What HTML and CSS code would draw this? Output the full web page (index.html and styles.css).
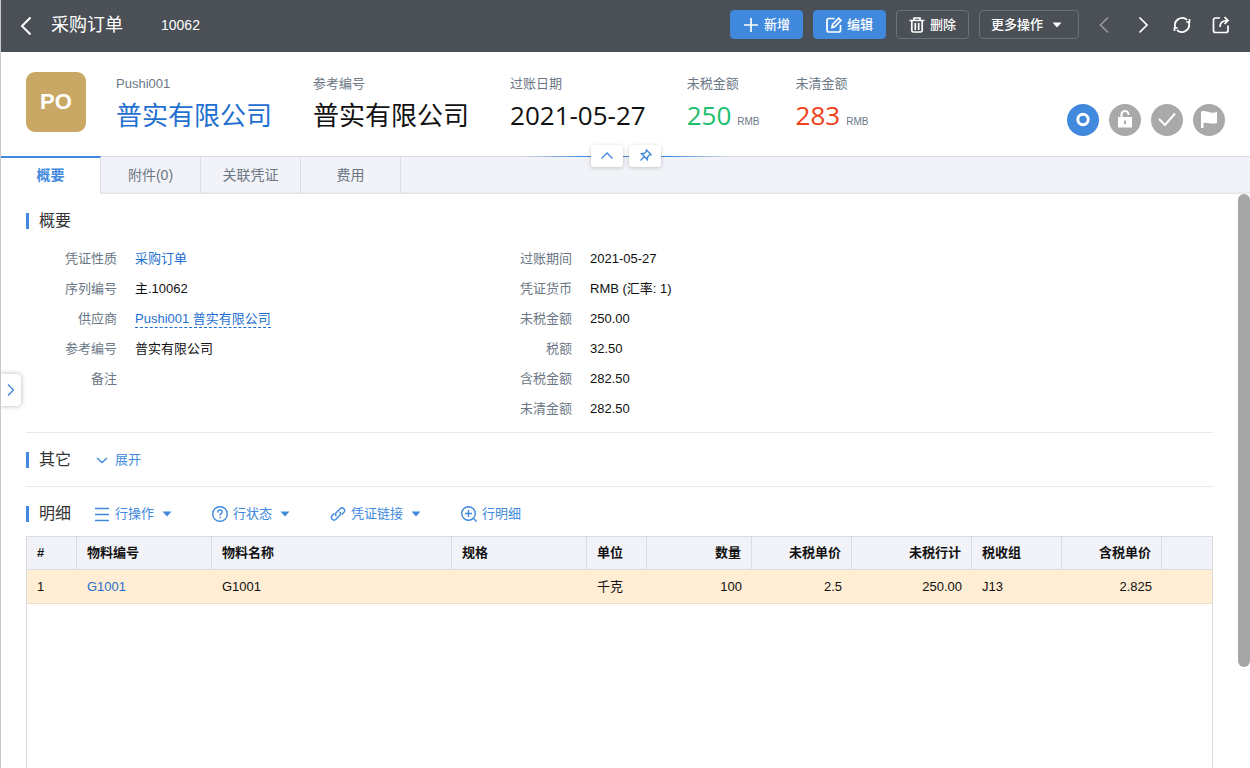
FILE: index.html
```html
<!DOCTYPE html>
<html lang="zh-CN">
<head>
    <meta charset="UTF-8">
    <meta name="viewport" content="width=device-width, initial-scale=1.0">
    <title>采购订单 10062</title>
    <link rel="stylesheet" href="styles.css">
</head>
<body>

<header class="topbar">
    <button class="icon-btn back" type="button" aria-label="返回">
        <svg width="12" height="20" viewBox="0 0 12 20"><path d="M10.500 2.500L2 11l8.500 8.500"/></svg>
    </button>
    <h1>采购订单</h1>
    <span class="doc-no">10062</span>
    <div class="actions">
        <button class="btn primary" type="button">
            <svg width="16" height="16" viewBox="0 0 16 16"><path d="M8 1v14M1 8h14"/></svg>新增
        </button>
        <button class="btn primary" type="button">
            <svg width="16" height="16" viewBox="0 0 16 16"><path d="M8.500 1.500H3Q1 1.500 1 3.500V13q0 2 2 2h9.500q2 0 2-2V8M6 10.500l.6-3L12.700 1.200l2.200 2.200L8.800 9.800z"/></svg>编辑
        </button>
        <button class="btn" type="button">
            <svg width="16" height="16" viewBox="0 0 16 16"><path d="M.5 3.500h15M5 3.500V1h6v2.500M2.800 4v9.500q0 1.500 1.500 1.500h7.400q1.500 0 1.500-1.500V4M6.300 6v7M9.700 6v7"/></svg>删除
        </button>
        <button class="btn more" type="button">更多操作
            <svg class="caret" width="10" height="6" viewBox="0 0 10 6"><path d="M.5.500h9L5 5.500z"/></svg>
        </button>
    </div>
    <nav class="tools">
        <button class="icon-btn" type="button" aria-label="上一张" disabled>
            <svg width="18" height="18" viewBox="0 0 18 18"><path d="M13 1.500L5.500 9l7.500 7.500"/></svg>
        </button>
        <button class="icon-btn" type="button" aria-label="下一张">
            <svg width="18" height="18" viewBox="0 0 18 18"><path d="M5.500 1.500L13 9l-7.500 7.500"/></svg>
        </button>
        <button class="icon-btn" type="button" aria-label="刷新">
            <svg width="18" height="18" viewBox="0 0 18 18"><path d="M2.400 11.900A7.300 7.300 0 0 1 14.100 3.900M15.600 6.100A7.300 7.300 0 0 1 3.900 14.100M1.500 15v-3h3.200M16.500 3v3h-3.200"/></svg>
        </button>
        <button class="icon-btn" type="button" aria-label="新窗口打开">
            <svg width="18" height="18" viewBox="0 0 18 18"><path d="M8 2H3.500q-2 0-2 2v10.500q0 2 2 2h10.500q2 0 2-2V9.500M8 11q0-6.500 7.500-6.500M12.500 1.200L16 4.500l-3.500 3.300"/></svg>
        </button>
    </nav>
</header>

<section class="summary">
    <div class="avatar">PO</div>
    <div class="field">
        <span class="caption">Pushi001</span>
        <a class="big link" href="#">普实有限公司</a>
    </div>
    <div class="field">
        <span class="caption">参考编号</span>
        <span class="big">普实有限公司</span>
    </div>
    <div class="field">
        <span class="caption">过账日期</span>
        <span class="big">2021-05-27</span>
    </div>
    <div class="field amount">
        <span class="caption">未税金额</span>
        <span class="big green">250<small>RMB</small></span>
    </div>
    <div class="field amount">
        <span class="caption">未清金额</span>
        <span class="big red">283<small>RMB</small></span>
    </div>
    <div class="states">
        <button class="state on" type="button" aria-label="未清">
            <svg width="32" height="32" viewBox="0 0 32 32"><ellipse cx="16" cy="15.500" rx="5.200" ry="5.300" fill="none" stroke="#fff" stroke-width="3"/></svg>
        </button>
        <button class="state" type="button" aria-label="锁定">
            <svg width="32" height="32" viewBox="0 0 32 32"><path d="M12.500 14v-3.500a3.500 3.500 0 0 1 7 0V11" fill="none" stroke="#fff" stroke-width="2"/><path d="M9 13h14v10.500H9z" fill="#fff"/><path d="M16 16.500v3.500" stroke="#a9a9a9" stroke-width="2"/></svg>
        </button>
        <button class="state" type="button" aria-label="审批">
            <svg width="32" height="32" viewBox="0 0 32 32"><path d="M8 15l6 6L24 9.500" fill="none" stroke="#fff" stroke-width="2"/></svg>
        </button>
        <button class="state" type="button" aria-label="标记">
            <svg width="32" height="32" viewBox="0 0 32 32"><path d="M8 7.500q3-1 7.500.5t8.500 0V19q-4 1.200-8 .2-3-.9-5.500-.2V24H8z" fill="#fff"/></svg>
        </button>
    </div>
    <div class="fold">
        <button type="button" aria-label="收起">
            <svg width="14" height="14" viewBox="0 0 14 14"><path d="M1.500 9.500L7 4l5.500 5.500"/></svg>
        </button>
        <button type="button" aria-label="固定">
            <svg width="14" height="14" viewBox="0 0 14 14"><path d="M8.500 1L13 5.500l-1.700.5-1.600 1.700-.3 2.900L3.500 4.700l2.900-.4L8 2.700zM6 8l-3.500 3.500"/></svg>
        </button>
    </div>
</section>

<nav class="tabs">
    <a class="tab active" href="#">概要</a>
    <a class="tab" href="#">附件(0)</a>
    <a class="tab" href="#">关联凭证</a>
    <a class="tab" href="#">费用</a>
</nav>

<main>
    <!-- 概要 -->
    <section class="block">
        <div class="block-head"><h2>概要</h2></div>
        <div class="info">
            <dl>
                <dt>凭证性质</dt><dd><a href="#">采购订单</a></dd>
                <dt>序列编号</dt><dd>主.10062</dd>
                <dt>供应商</dt><dd><a class="dashed" href="#">Pushi001 普实有限公司</a></dd>
                <dt>参考编号</dt><dd>普实有限公司</dd>
                <dt>备注</dt><dd></dd>
            </dl>
            <dl>
                <dt>过账期间</dt><dd>2021-05-27</dd>
                <dt>凭证货币</dt><dd>RMB (汇率: 1)</dd>
                <dt>未税金额</dt><dd>250.00</dd>
                <dt>税额</dt><dd>32.50</dd>
                <dt>含税金额</dt><dd>282.50</dd>
                <dt>未清金额</dt><dd>282.50</dd>
            </dl>
        </div>
    </section>

    <!-- 其它 -->
    <section class="block">
        <div class="block-head">
            <h2>其它</h2>
            <button class="text-btn" type="button">
                <svg width="16" height="16" viewBox="0 0 16 16"><path d="M3 6l5 4.500L13 6"/></svg>展开
            </button>
        </div>
    </section>

    <!-- 明细 -->
    <section class="block detail">
        <div class="block-head">
            <h2>明细</h2>
            <button class="text-btn" type="button">
                <svg width="16" height="16" viewBox="0 0 16 16"><path d="M1 2.500h14M1 8.500h14M1 14.500h14"/></svg>行操作
                <svg class="caret" width="10" height="6" viewBox="0 0 10 6"><path d="M.5.500h9L5 5.500z"/></svg>
            </button>
            <button class="text-btn" type="button">
                <svg width="16" height="16" viewBox="0 0 16 16"><circle cx="8" cy="8" r="7.300"/><path d="M5.800 6.500q0-2.500 2.200-2.500t2.200 2q0 1-1.200 1.700-1 .6-1 1.800M8 10.800v1.500"/></svg>行状态
                <svg class="caret" width="10" height="6" viewBox="0 0 10 6"><path d="M.5.500h9L5 5.500z"/></svg>
            </button>
            <button class="text-btn" type="button">
                <svg width="16" height="16" viewBox="0 0 16 16"><path d="M6.500 10.200Q4.500 8.500 6.300 6.500l4-4q1.800-1.400 3.500.2t.2 3.500l-2.300 2.400M9.500 5.800q2 1.700.2 3.700l-4 4q-1.800 1.400-3.500-.2t-.2-3.500l2.300-2.400"/></svg>凭证链接
                <svg class="caret" width="10" height="6" viewBox="0 0 10 6"><path d="M.5.500h9L5 5.500z"/></svg>
            </button>
            <button class="text-btn" type="button">
                <svg width="16" height="16" viewBox="0 0 16 16"><circle cx="7.500" cy="7.500" r="6.800"/><path d="M7.500 4v7M4 7.500h7M12.300 12.300l3.500 3.500"/></svg>行明细
            </button>
        </div>
        <div class="grid">
            <table>
                <colgroup>
                    <col class="w50"><col class="w135"><col class="w240"><col class="w135"><col class="w60"><col class="w105">
                    <col class="w100"><col class="w120"><col class="w90"><col class="w100"><col>
                </colgroup>
                <thead>
                    <tr>
                        <th>#</th>
                        <th>物料编号</th>
                        <th>物料名称</th>
                        <th>规格</th>
                        <th>单位</th>
                        <th class="num">数量</th>
                        <th class="num">未税单价</th>
                        <th class="num">未税行计</th>
                        <th>税收组</th>
                        <th class="num">含税单价</th>
                        <th></th>
                    </tr>
                </thead>
                <tbody>
                    <tr>
                        <td>1</td>
                        <td><a href="#">G1001</a></td>
                        <td>G1001</td>
                        <td></td>
                        <td>千克</td>
                        <td class="num">100</td>
                        <td class="num">2.5</td>
                        <td class="num">250.00</td>
                        <td>J13</td>
                        <td class="num">2.825</td>
                        <td></td>
                    </tr>
                </tbody>
            </table>
        </div>
    </section>
    <div class="scroll-thumb"></div>
</main>

<button class="side-handle" type="button" aria-label="展开侧栏">
    <svg width="10" height="14" viewBox="0 0 10 14"><path d="M2 1.500L7.500 7 2 12.500"/></svg>
</button>

</body>
</html>
```
FILE: styles.css
```css
* {
    box-sizing: border-box;
}

body {
    display: flex;
    flex-direction: column;
    position: relative;
    height: 100vh;
    margin: 0;
    border-left: 1px solid #c8c8c8;
    overflow: hidden;
    background: #fff;
    color: #111;
    font-family: "Liberation Sans", "Noto Sans CJK SC", sans-serif;
    font-size: 13px;
    line-height: 20px;
}

h1,
h2,
dl,
dd {
    margin: 0;
    font-weight: normal;
}

a {
    color: #1f70d0;
    text-decoration: none;
}

button {
    display: inline-flex;
    align-items: center;
    justify-content: center;
    padding: 0;
    border: 0;
    background: none;
    color: inherit;
    font: inherit;
    cursor: pointer;
}

svg {
    flex: none;
    fill: none;
    stroke: currentColor;
    stroke-width: 2;
}

svg.caret {
    fill: currentColor;
    stroke: none;
}

/* 顶部栏 */
.topbar {
    display: flex;
    flex: none;
    align-items: center;
    height: 52px;
    padding: 0 20px 3px 19px;
    background: #4a5056;
    color: #fff;
}

.topbar h1 {
    margin: 0 38px 0 19px;
    font-size: 18px;
}

.doc-no {
    font-size: 14px;
}

.actions {
    display: flex;
    gap: 10px;
    margin: 0 16px 0 auto;
}

.btn {
    gap: 5px;
    height: 29px;
    padding: 0 12px;
    border: 1px solid #66737f;
    border-radius: 4px;
    font-weight: 500;
}

.btn svg,
.tools svg {
    stroke-width: 1.7;
}

.btn.primary {
    border-color: #4089dd;
    background: #4089dd;
}

.btn.more {
    gap: 9px;
    padding: 0 16px 0 11px;
}

.tools {
    display: flex;
    gap: 21px;
}

.icon-btn:disabled {
    color: #969a9e;
}

/* 摘要 */
.summary {
    display: flex;
    flex: none;
    position: relative;
    align-items: flex-start;
    height: 105px;
    padding: 20px 25px 0;
    border-bottom: 1px solid #dadce6;
}

.avatar {
    width: 60px;
    height: 60px;
    margin-right: 30px;
    border-radius: 9px;
    background: #c9a764;
    color: #fff;
    font-size: 22px;
    font-weight: bold;
    line-height: 60px;
    text-align: center;
}

.field {
    display: flex;
    flex-direction: column;
    margin: 2px 41px 0 0;
}

.field.amount {
    margin-right: 36px;
}

.caption {
    color: #6b7785;
}

.big {
    font-family: "Open Sans", "Noto Sans CJK SC", sans-serif;
    font-size: 26px;
    line-height: 42px;
}

.big small {
    margin-left: 6px;
    color: #6b7785;
    font-family: "Liberation Sans", sans-serif;
    font-size: 10px;
}

.green {
    color: #1bbf6c;
}

.red {
    color: #f04018;
}

.states {
    display: flex;
    gap: 10px;
    margin: 32px 0 0 auto;
}

.state {
    width: 32px;
    height: 32px;
    border-radius: 50%;
    background: #a9a9a9;
}

.state svg {
    stroke: none;
}

.state.on {
    background: #4089dd;
}

.fold {
    display: flex;
    position: absolute;
    bottom: -11px;
    left: 50%;
    justify-content: center;
    gap: 6px;
    width: 210px;
    margin-left: -105px;
    background: linear-gradient(90deg, transparent, #4089dd 30%, #4089dd 70%, transparent) 0 11px / 100% 1px no-repeat;
}

.fold button {
    width: 32px;
    height: 22px;
    border-radius: 3px;
    background: #fff;
    box-shadow: 0 1px 4px rgba(0, 0, 0, 0.2);
    color: #4089dd;
}

.fold svg,
.side-handle svg,
.text-btn svg {
    stroke-width: 1.4;
}

/* 页签 */
.tabs {
    display: flex;
    flex: none;
    height: 37px;
    background: #f2f3f8;
    box-shadow: inset 0 -3px 3px -2px #dcdde2;
}

.tab {
    width: 100px;
    border-right: 1px solid #dadce6;
    color: #6b7785;
    font-size: 14px;
    line-height: 36px;
    text-align: center;
}

.tab.active {
    z-index: 1;
    margin-top: -1px;
    border-top: 2px solid #4089dd;
    background: #fff;
    color: #4089dd;
    font-weight: bold;
    line-height: 34px;
}

/* 内容 */
main {
    flex: 1;
    display: flex;
    flex-direction: column;
    position: relative;
    min-height: 0;
    padding: 0 37px 0 25px;
}

.block {
    padding: 16px 0;
    border-bottom: 1px solid #e8e8e8;
}

.block:first-child {
    padding-bottom: 8px;
}

.block-head {
    display: flex;
    align-items: center;
    height: 21px;
}

.block-head h2 {
    margin-right: 23px;
    padding-left: 10px;
    border-left: 3px solid #4089dd;
    color: #333;
    font-size: 16px;
    line-height: 16px;
}

.info {
    display: grid;
    grid-template-columns: 23fr 37fr;
    margin-top: 13px;
}

dl {
    display: grid;
    grid-template-columns: 91px 1fr;
    grid-auto-rows: 30px;
    align-items: center;
    column-gap: 18px;
}

dt {
    color: #6b7785;
    text-align: right;
}

.dashed {
    display: inline-block;
    border-bottom: 1px dashed #1f70d0;
    line-height: 16px;
}

.text-btn {
    gap: 5px;
    margin-right: 40px;
    color: #4089dd;
}

.text-btn .caret {
    margin-left: 3px;
}

.detail {
    display: flex;
    flex: 1;
    flex-direction: column;
    padding-bottom: 0;
    border: 0;
}

.grid {
    flex: 1;
    margin-top: 12px;
    border: 1px solid #dadce2;
    border-bottom: 0;
}

table {
    width: 100%;
    border-collapse: separate;
    border-spacing: 0;
    table-layout: fixed;
}

th,
td {
    height: 33px;
    padding: 0 10px;
    border-bottom: 1px solid #dadce2;
    text-align: left;
}

th {
    border-right: 1px solid #dadce2;
    background: #f2f3f8;
}

th:last-child {
    border-right: 0;
}

td {
    height: 34px;
    border-bottom-color: #ecdfc6;
    background: #ffedd4;
}

.num {
    text-align: right;
}

.w50 { width: 50px; }
.w60 { width: 60px; }
.w90 { width: 90px; }
.w100 { width: 100px; }
.w105 { width: 105px; }
.w120 { width: 120px; }
.w135 { width: 135px; }
.w240 { width: 240px; }

.scroll-thumb {
    position: absolute;
    top: 0;
    right: 0;
    width: 12px;
    height: 82.4%;
    border-radius: 6px;
    background: #a6a6a6;
}

.side-handle {
    position: absolute;
    top: 374px;
    left: 0;
    width: 20px;
    height: 32px;
    border-radius: 0 4px 4px 0;
    background: #fff;
    box-shadow: 0 0 5px rgba(0, 0, 0, 0.3);
    color: #4089dd;
}
```
